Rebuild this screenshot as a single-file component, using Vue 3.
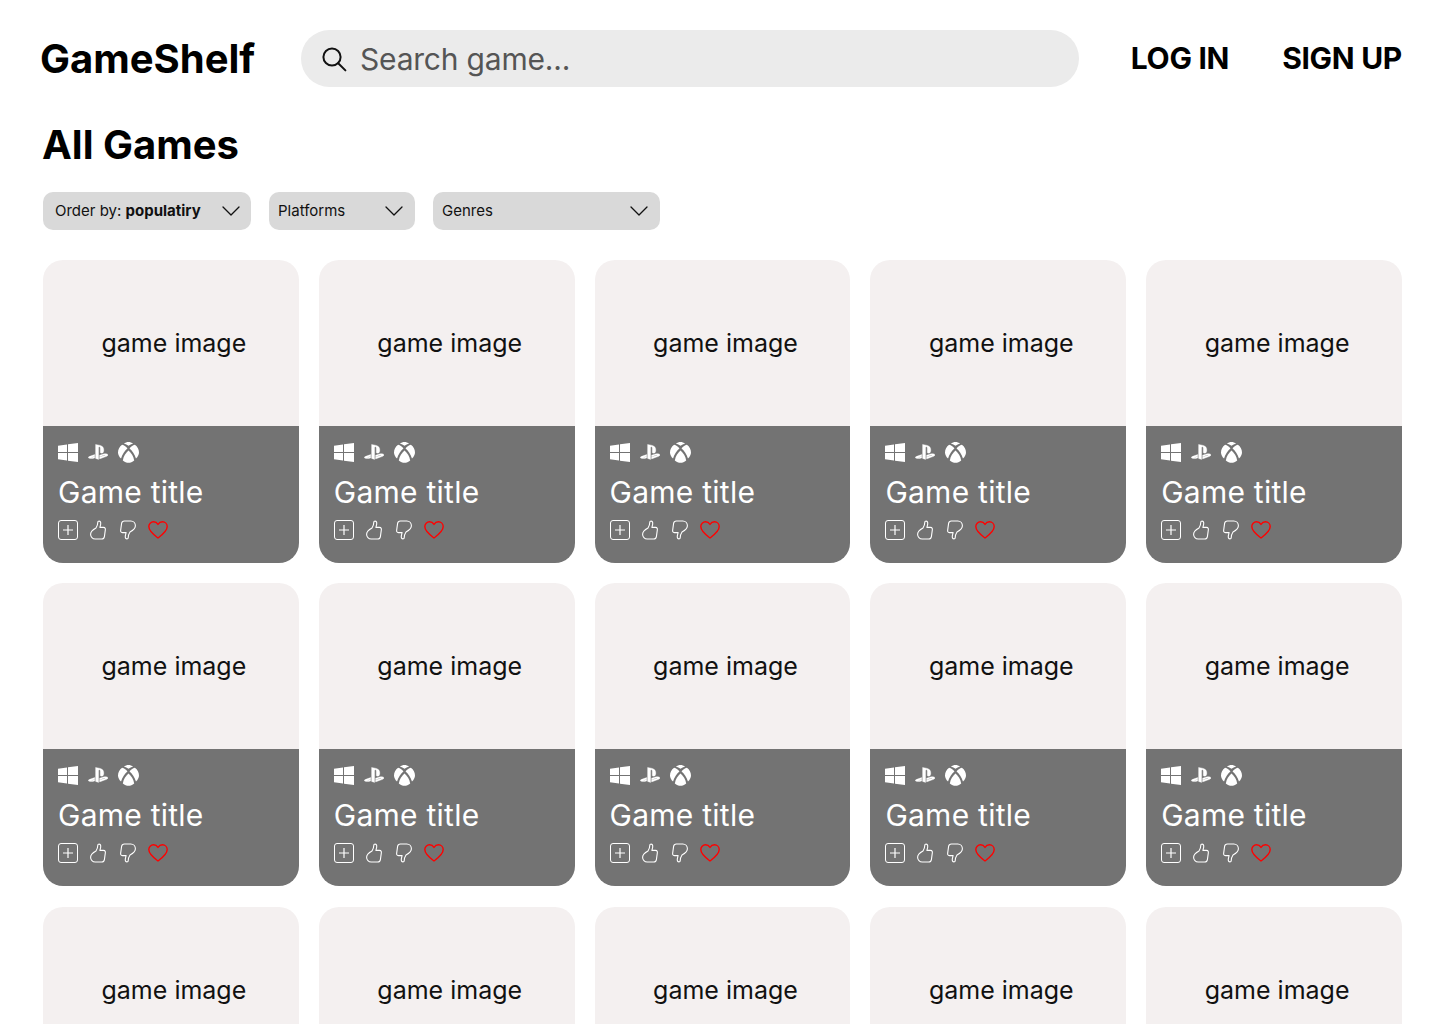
<script setup>
const cards = Array.from({ length: 15 }, (_, i) => i)
const filters = [
  { key: 'order', label: 'Order by: ', strong: 'populatiry' },
  { key: 'platforms', label: 'Platforms' },
  { key: 'genres', label: 'Genres' }
]
</script>

<template>
  <div class="page">
    <header class="top">
      <div class="logo">GameShelf</div>
      <div class="search">
        <svg class="search-icon" viewBox="0 0 26 26" fill="none" stroke="#111" stroke-width="2">
          <circle cx="11" cy="11" r="8.6" />
          <path d="M17.2 17.2 24.4 24.4" stroke-linecap="round" />
        </svg>
        <span class="placeholder">Search game...</span>
      </div>
      <nav class="auth">
        <a class="login">LOG IN</a>
        <a class="signup">SIGN UP</a>
      </nav>
    </header>

    <h1 class="heading">All Games</h1>

    <div class="filters">
      <div v-for="f in filters" :key="f.key" class="filter" :class="f.key">
        <span>{{ f.label }}<b v-if="f.strong">{{ f.strong }}</b></span>
        <svg class="chev" viewBox="0 0 18 10" fill="none" stroke="#111" stroke-width="1.3">
          <path d="M1 1 9 9 17 1" stroke-linecap="round" stroke-linejoin="round" />
        </svg>
      </div>
    </div>

    <main class="grid">
      <article v-for="c in cards" :key="c" class="card">
        <div class="image"><span>game image</span></div>
        <div class="info">
          <div class="platforms">
            <svg class="win" viewBox="0 0 20 19" fill="#fff">
              <path d="M0 2.7 9 1.5V9H0ZM10 1.3 20 0V9H10ZM0 10H9V17.5L0 16.3ZM10 10H20V19L10 17.7Z" />
            </svg>
            <svg class="ps" viewBox="0 0 20 16" fill="#fff" stroke="#fff" stroke-width="0.35">
              <path d="M7.6 0.4V14.4L10.6 15.4V3.8C10.6 3 11 2.6 11.5 2.8 12.1 3 12.3 3.5 12.3 4.2V8.8C14.3 9.8 15.8 8.8 15.8 6.2 15.8 3.5 14.9 2.3 12.4 1.5 10.9 1 9 0.5 7.6 0.4Z" />
              <path d="M6.7 10.6 2.4 12.1C0.2 12.9-0.4 13.7 1.2 14.3 3 14.8 4.8 14.6 6.7 13.9V12.6L3.9 13.5C3.4 13.7 3.2 13.4 3.8 13.2L6.7 12.2Z" />
              <path d="M11.6 11.2 15.3 10C17.2 9.4 19.2 9.7 19.8 10.5 20.2 11.2 19.5 12 18 12.6L11.6 14.9V13.1L16.4 11.4C17 11.2 16.9 10.9 16.2 11L11.6 12.7Z" />
            </svg>
            <svg class="xbox" viewBox="0 0 20 20" fill="#fff">
              <path d="M10 3.6C8.7 2.7 7.3 1.9 5.6 1.5 8.2-0.5 11.8-0.5 14.4 1.5 12.7 1.9 11.3 2.7 10 3.6Z" />
              <path d="M3.9 2.7C6 3 8 5 9 6.2 6.6 8.3 4 11.5 2.9 15.8 1 14 0 12 0 10 0 7 1.4 4.6 3.9 2.7Z" />
              <path d="M16.1 2.7C14 3 12 5 11 6.2 13.4 8.3 16 11.5 17.1 15.8 19 14 20 12 20 10 20 7 18.6 4.6 16.1 2.7Z" />
              <path d="M10 8.2C7.6 10.4 5 13.8 4.6 17.5 8 20.6 12 20.6 15.4 17.5 15 13.8 12.4 10.4 10 8.2Z" />
            </svg>
          </div>
          <div class="title">Game title</div>
          <div class="actions">
            <svg class="act" viewBox="0 0 20 20" fill="none" stroke="#fff" stroke-width="1">
              <rect x="0.5" y="0.5" width="19" height="19" rx="2.5" />
              <path d="M10 5V15M5 10H15" stroke-width="1.2" />
            </svg>
            <svg class="act" viewBox="0 0 20 20" fill="none" stroke="#fff" stroke-width="1.1" stroke-linejoin="round">
              <path d="M8 8C9.3 6 9.8 4.5 9.8 2.2 9.8 0.8 12.4 0.6 12.7 2.6 13 4.3 12.2 6 11.9 7.4H15.5C17.2 7.4 17.6 8.7 17.3 10.2L16.4 16.6C16.1 18.3 15.2 19 13.6 19H7.2C4.6 19 2.6 17 2.6 14.2 2.6 11 5 9.6 8 8Z" />
            </svg>
            <svg class="act" viewBox="0 0 20 20" fill="none" stroke="#fff" stroke-width="1.1" stroke-linejoin="round">
              <path d="M12 12C10.7 14 10.2 15.5 10.2 17.8 10.2 19.2 7.6 19.4 7.3 17.4 7 15.7 7.8 14 8.1 12.6H4.5C2.8 12.6 2.4 11.3 2.7 9.8L3.6 3.4C3.9 1.7 4.8 1 6.4 1H12.8C15.4 1 17.4 3 17.4 5.8 17.4 9 15 10.4 12 12Z" />
            </svg>
            <svg class="act heart" viewBox="0 0 20 18" fill="none" stroke="#f00" stroke-width="1.4" stroke-linejoin="round">
              <path d="M10 17C6 14 .8 10.4 .8 5.6 .8 2.8 3 .8 5.5 .8 7.4 .8 9 1.8 10 3.4 11 1.8 12.6 .8 14.5 .8 17 .8 19.2 2.8 19.2 5.6 19.2 10.4 14 14 10 17Z" />
            </svg>
          </div>
        </div>
      </article>
    </main>
  </div>
</template>

<style>
html, body { margin: 0; overflow: hidden; background: #fff; }
</style>

<style scoped>
.page {
  box-sizing: border-box;
  width: 1440px;
  height: 1024px;
  overflow: hidden;
  padding: 30px 38px 0 43px;
  font-family: Inter, "Liberation Sans", sans-serif;
  color: #000;
}
.top {
  display: flex;
  align-items: center;
  height: 57px;
  margin-left: -3px;
}
.logo {
  width: 261px;
  font-size: 40px;
  font-weight: 700;
}
.search {
  box-sizing: border-box;
  width: 778px;
  height: 57px;
  flex: none;
  display: flex;
  align-items: center;
  gap: 13px;
  padding-left: 20px;
  background: #ebebeb;
  border-radius: 28.5px;
}
.search-icon { width: 26px; height: 26px; flex: none; }
.placeholder { font-size: 30px; letter-spacing: -0.2px; color: #555; }
.auth {
  margin-left: auto;
  display: flex;
  gap: 53px;
  font-size: 30px;
  font-weight: 700;
  letter-spacing: -0.3px;
  margin-top: -1px;
}
.heading {
  margin: 32px 0 0 -1px;
  font-size: 40px;
  line-height: 52px;
  font-weight: 700;
}
.filters {
  display: flex;
  gap: 18px;
  margin-top: 21px;
}
.filter {
  box-sizing: border-box;
  height: 38px;
  display: flex;
  align-items: center;
  justify-content: space-between;
  padding: 0 11px 0 9px;
  background: #d9d9d9;
  border-radius: 10px;
  font-size: 15px;
  line-height: 36px;
  color: #111;
}
.filter span { margin-top: -1px; }
.filter b { font-weight: 700; }
.order { width: 208px; padding-left: 12px; }
.platforms { width: 146px; padding-right: 12px; }
.genres { width: 227px; padding-right: 12px; }
.chev { width: 18px; height: 10px; flex: none; }
.grid {
  display: grid;
  grid-template-columns: repeat(5, 1fr);
  column-gap: 20px;
  row-gap: 20.2px;
  margin-top: 30px;
}
.card {
  height: 303.1px;
  border-radius: 20px;
  overflow: hidden;
  display: flex;
  flex-direction: column;
}
.image {
  height: 166px;
  flex: none;
  background: #f4f0f0;
  display: flex;
  align-items: center;
  justify-content: center;
  padding-left: 6px;
  box-sizing: border-box;
  font-size: 25px;
  color: #111;
}
.info {
  flex: 1;
  background: #737373;
  color: #fff;
  padding: 15px 15px 0;
}
.info .platforms {
  width: auto;
  padding: 0;
  display: flex;
  align-items: center;
  height: 22px;
}
.win { width: 20px; height: 19px; }
.ps { width: 20px; height: 16px; margin-left: 10px; }
.xbox { width: 21px; height: 21px; margin-left: 10px; }
.title {
  font-size: 30px;
  line-height: 36px;
  letter-spacing: 0.25px;
  margin-top: 11px;
}
.actions {
  display: flex;
  align-items: center;
  gap: 10px;
  margin-top: 10px;
}
.act { width: 20px; height: 20px; flex: none; }
.heart { height: 18px; }
</style>
